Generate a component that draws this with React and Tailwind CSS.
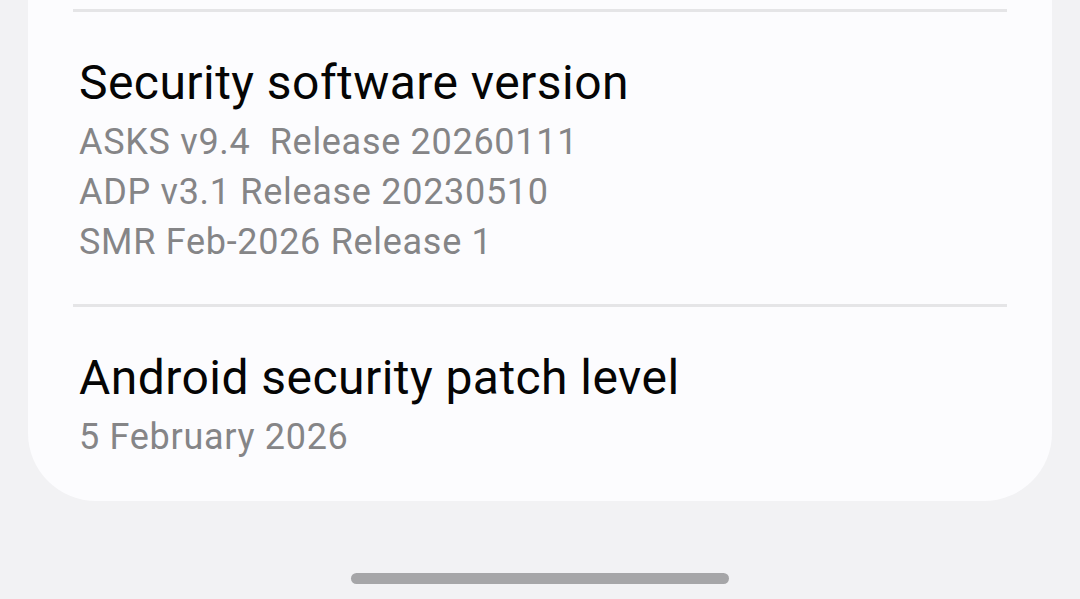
const ITEMS = [
  {
    title: 'Security software version',
    lines: ['ASKS v9.4  Release 20260111', 'ADP v3.1 Release 20230510', 'SMR Feb-2026 Release 1'],
  },
  {
    title: 'Android security patch level',
    lines: ['5 February 2026'],
  },
]

function InfoRow({ title, lines }) {
  return (
    <div className="px-[51px] pt-[42px] pb-[37px]">
      <p className="text-[48px] leading-[58px] tracking-[0.45px] text-[#050505]">{title}</p>
      <div className="mt-[5px]">
        {lines.map(l => (
          <p key={l} className="text-[36px] leading-[50px] tracking-[0.7px] text-[#858587] whitespace-pre">{l}</p>
        ))}
      </div>
    </div>
  )
}

export default function App() {
  return (
    <div
      className="h-[599px] w-full bg-[#f2f2f4] flex flex-col overflow-hidden"
      style={{ fontFamily: "Roboto, 'Noto Sans', sans-serif" }}
    >
      {/* Card, top edge runs off the screen */}
      <div className="mx-[28px] bg-[#fcfcfe] rounded-b-[68px] pt-[9px] pb-[2px]">
        {ITEMS.map(item => (
          <div key={item.title}>
            <div className="mx-[45px] h-[3px] bg-[#e5e5e7]" />
            <InfoRow {...item} />
          </div>
        ))}
      </div>

      <div className="flex-1" />

      {/* Gesture bar */}
      <div className="flex justify-center pb-[15px]">
        <div className="w-[378px] h-[11px] rounded-full bg-[#a6a6a8]" />
      </div>
    </div>
  )
}
